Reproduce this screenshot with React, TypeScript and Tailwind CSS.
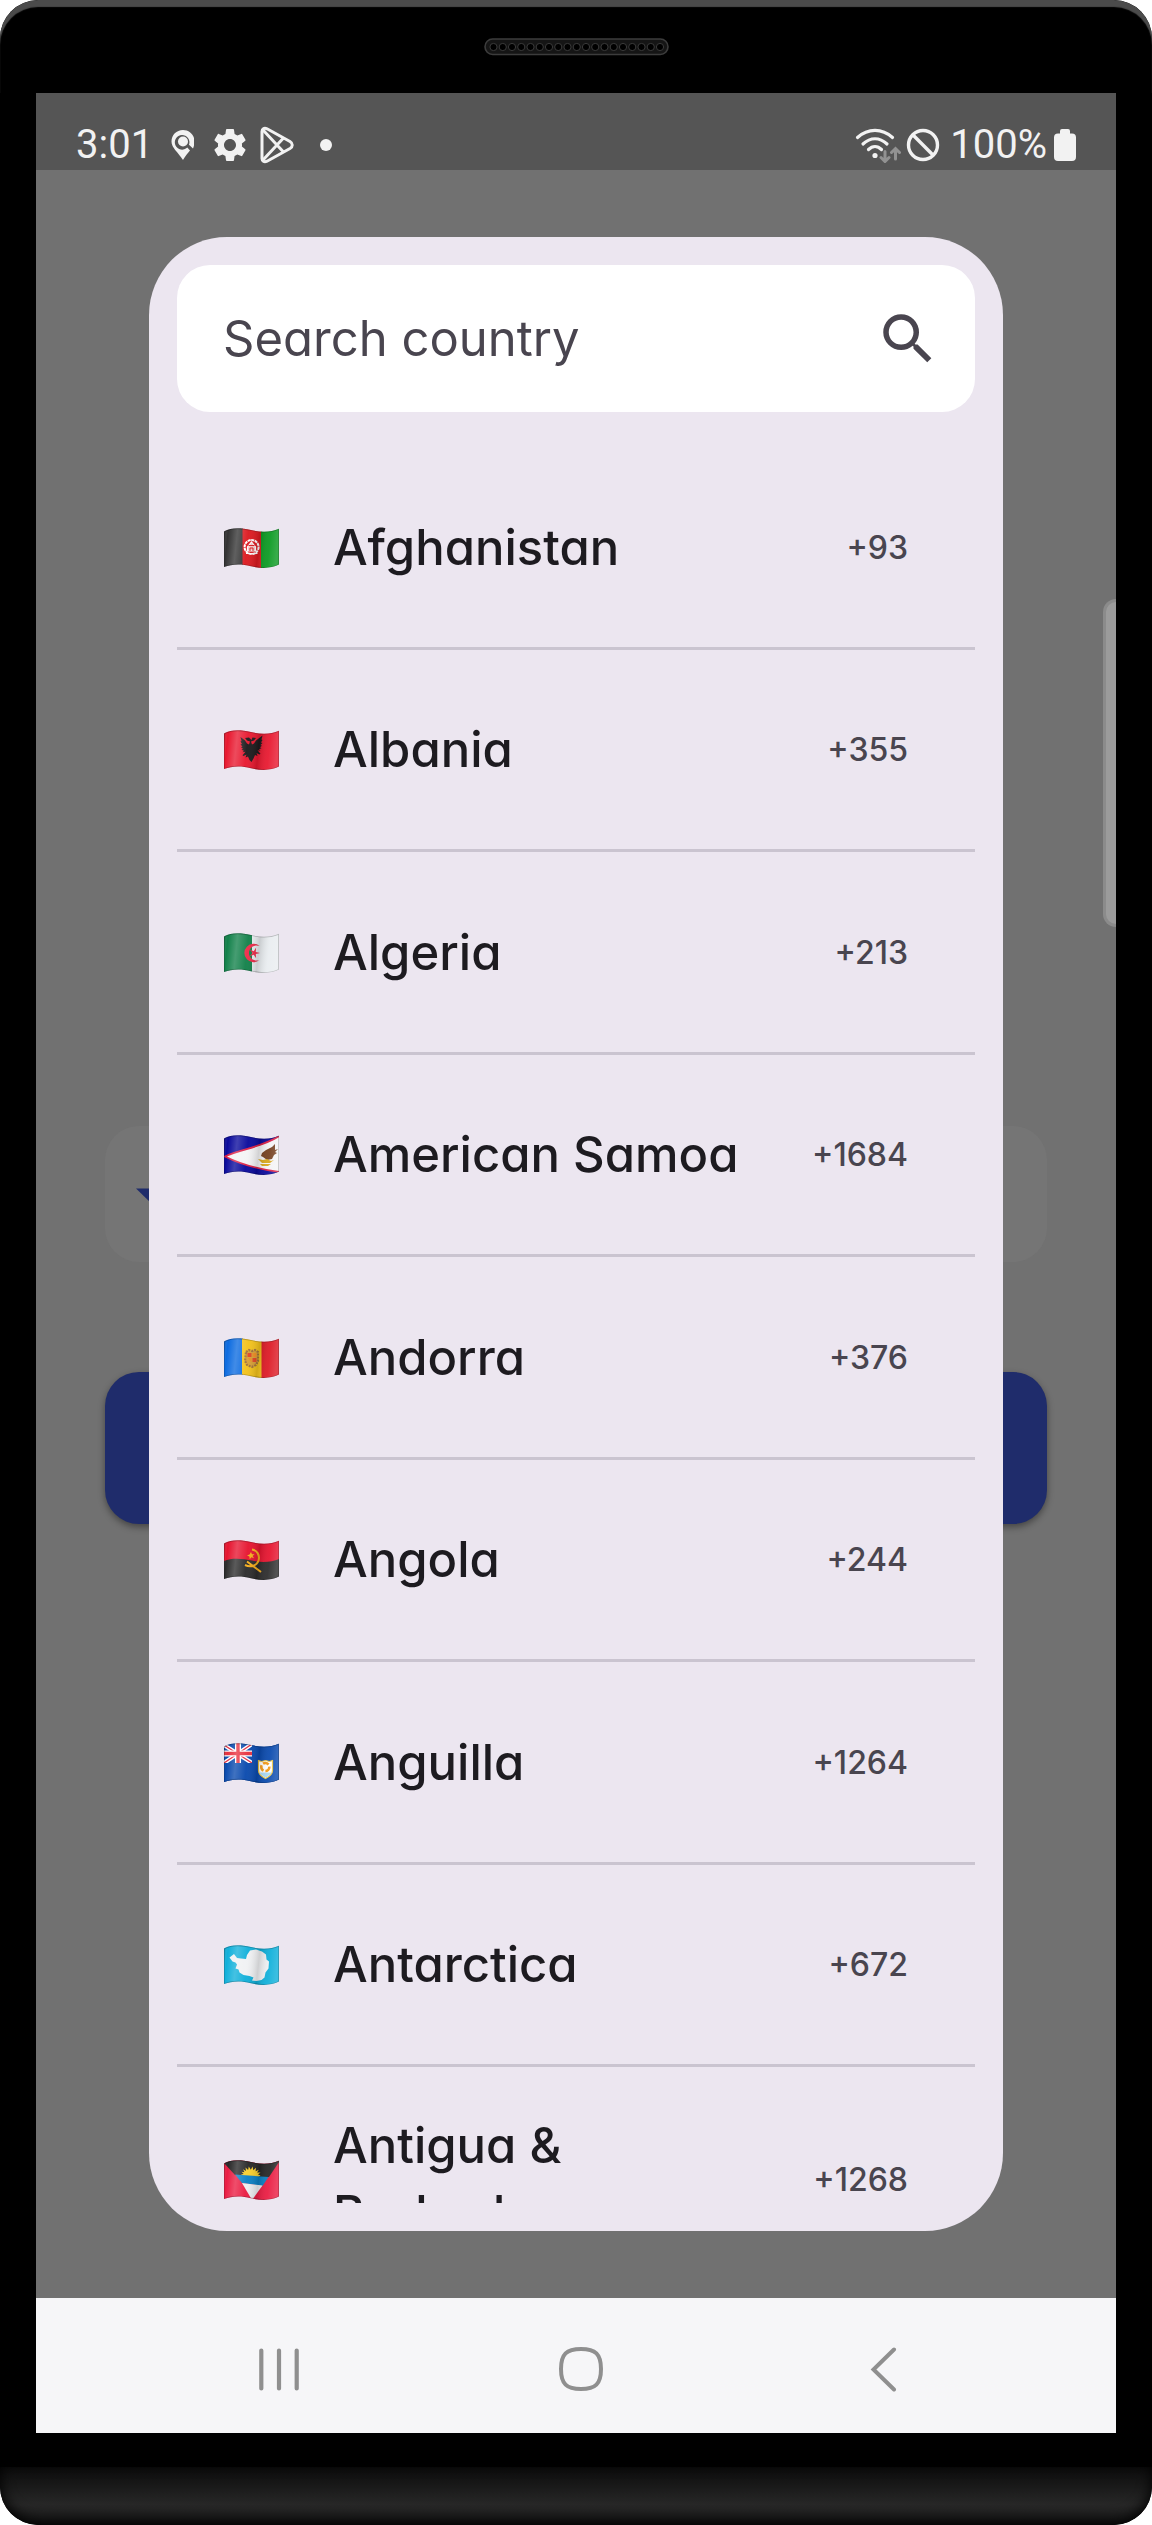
import React, { useId, useState } from "react";
import { MdSearch, MdSettings } from "react-icons/md";

const FLAG_SHAPE =
  "M0 3.5C7 -0.5 16 -0.5 27 2C38 4.8 47 4.2 55 0.8V36.6C47 40.6 37 40.8 27 38.2C17 35.6 8 36 0 39Z";

function Flag({ label, children }: { label: string; children: React.ReactNode }) {
  const id = useId();
  return (
    <svg viewBox="0 0 55 40" className="h-[40px] w-[55px] shrink-0" role="img" aria-label={`Flag of ${label}`}>
      <defs>
        <clipPath id={`${id}c`}>
          <path d={FLAG_SHAPE} />
        </clipPath>
        <linearGradient id={`${id}g`} x1="0" y1="0" x2="1" y2="0.08">
          <stop offset="0" stopColor="#000" stopOpacity="0.22" />
          <stop offset="0.08" stopColor="#fff" stopOpacity="0" />
          <stop offset="0.25" stopColor="#fff" stopOpacity="0.22" />
          <stop offset="0.45" stopColor="#fff" stopOpacity="0.04" />
          <stop offset="0.66" stopColor="#000" stopOpacity="0.14" />
          <stop offset="0.85" stopColor="#fff" stopOpacity="0.06" />
          <stop offset="1" stopColor="#fff" stopOpacity="0.18" />
        </linearGradient>
      </defs>
      <g clipPath={`url(#${id}c)`}>
        {children}
        <rect width="55" height="41" fill={`url(#${id}g)`} />
        <path d={FLAG_SHAPE} fill="none" stroke="#000" strokeOpacity="0.22" strokeWidth="1.6" />
      </g>
    </svg>
  );
}

const flags: Record<string, React.ReactNode> = {
  Afghanistan: (
    <>
      <rect width="19" height="41" fill="#333" />
      <rect x="18.5" width="19" height="41" fill="#dc1a20" />
      <rect x="37" width="18" height="41" fill="#0b9a22" />
      <circle cx="27.6" cy="19" r="7" fill="none" stroke="#fff" strokeWidth="2" strokeDasharray="3 0.6" />
      <path d="M23.5 23v-4l4-5 4 5v4zM22 25.500h11.500" fill="#f7c9c9" stroke="#fff" strokeWidth="1.2" />
      <path d="M26 23v-3h3v3M24.500 17.500h6" stroke="#dc1a20" strokeWidth="1" fill="none" />
    </>
  ),
  Albania: (
    <>
      <rect width="55" height="41" fill="#e8182f" />
      <path
        d="M27.500 10L25 7.500 21 8l2 2.500 3 1-1 3-2-1-2-3-4.500-3.500 1 4-1 .500 1.500 2.500-1.500.500 2 2-1.500.800 2 1.500-1.500 1 2.500 1-1.500 1.500 3-.500-3 3.500 1 .700 3-1.500-1 3 2.500-1 1.500 3.500L27.500 32l2-3.500 1.500-3.500 2.500 1-1-3 3 1.500 1-.700-3-3.500 3 .500-1.500-1.500 2.500-1-1.500-1 2-1.500-1.500-.800 2-2-1.500-.500 1.500-2.500-1-.500 1-4L32 10.500l-2 3-2 1-1-3 3-1 2-2.500-3.500-.500z"
        fill="#1c1a1c"
      />
    </>
  ),
  Algeria: (
    <>
      <rect width="28" height="41" fill="#12814a" />
      <rect x="28" width="27" height="41" fill="#e9edf0" />
      <path d="M35.500 13a9.200 9.200 0 1 0 0 14a7.600 7.600 0 1 1 0-14z" fill="#ee2b49" />
      <path d="M36 20l-4.200 1 .300 4.300-2.300-3.600-4 1.600 2.700-3.300-2.700-3.400 4 1.600 2.300-3.600-.300 4.300z" fill="#ee2b49" />
    </>
  ),
  "American Samoa": (
    <>
      <rect width="55" height="41" fill="#0a0a9c" />
      <path d="M1 21.500C16 14 40 12 56 .500V37C40 35 22 32 1 21.500z" fill="#f4f4f5" stroke="#dc1f45" strokeWidth="1.800" />
      <path d="M38 18l4-3 6-3 3-3v6l3-1-3 3 2 1-3 2-2 4-5 1-4-3-2-1z" fill="#74401f" />
      <path d="M34 24l5 1 4-1 4 2 3-1-4 3H38zM36 29h11l-3 2h-6z" fill="#d9a81c" />
    </>
  ),
  Andorra: (
    <>
      <rect width="19" height="41" fill="#0c6be0" />
      <rect x="18" width="20" height="41" fill="#f3c21b" />
      <rect x="37.500" width="18" height="41" fill="#dd1a25" />
      <path d="M22 14l3-2 3 1 3-1 3 2v9l-2 4-4 2-5-2-2-4z" fill="#d8a036" stroke="#a1713c" strokeWidth="2.200" strokeDasharray="2 1" />
      <path d="M23.500 15h4v4h-4zM28.500 20h4v4h-4z" fill="#e24525" />
      <path d="M28.500 15h4v4h-4zM24 20h3.500v4.500z" fill="#ef8d22" />
    </>
  ),
  Angola: (
    <>
      <rect width="55" height="22" fill="#e6142f" />
      <path d="M0 21C9 17 20 19 28 20.500C38 23 48 22 55 19V41H0z" fill="#2c2c2c" />
      <path d="M28 9.500C33 10 36 15 34.500 20.500C33 25.500 27 28 21 25M23 21.500L37 32" fill="none" stroke="#f7ae1c" strokeWidth="2" />
      <path d="M27 12l1 2.300 2.500-.300-1.800 2 1.300 2.200-2.600-.900-1.700 2-.300-2.700-2.400-1 2.500-1z" fill="#f7ae1c" />
    </>
  ),
  Anguilla: (
    <>
      <rect width="55" height="41" fill="#0a4aae" />
      <path d="M0 2L28 20M28 1L0 20" stroke="#fff" strokeWidth="4" />
      <path d="M0 2L28 20M28 1L0 20" stroke="#e22b40" strokeWidth="1.400" />
      <path d="M14 0V20M0 10.500H28" stroke="#fff" strokeWidth="6" />
      <path d="M14 0V20M0 10.500H28" stroke="#e8303f" strokeWidth="3.400" />
      <path d="M28 0V20H0V41H55V0z" fill="#0a4aae" />
      <path d="M34.500 17.500l3 1 4-1 4 1 3-1v10c0 4-4 6.500-7 8-3-1.500-7-4-7-8z" fill="#fff" stroke="#ecc440" strokeWidth="1.200" />
      <path d="M35.500 29.500h12c-1 2.500-4 4-6 5-2-1-5-2.500-6-5z" fill="#a9d8f3" />
      <circle cx="41.300" cy="24" r="4" fill="none" stroke="#f59a17" strokeWidth="2.600" strokeDasharray="6 2" />
    </>
  ),
  Antarctica: (
    <>
      <rect width="55" height="41" fill="#10b0da" />
      <path
        d="M10 9l3 4 4 .500 5 .500 1-4 3-4.500 6-1 6 2 4 3 .500 5 2.500 2-.500 7-3 4-1 5-3 2.500-5 1-4.500-.500 1.500-3-4-1.500-6-1-4-2.500-1-3-3-1 1.500-4-1.500-2-3-1-3-4z"
        fill="#f0f1f3"
      />
    </>
  ),
  "Antigua & Barbuda": (
    <>
      <rect width="55" height="41" fill="#ea1c42" />
      <path d="M0 3V0H55V2L45 17 28 17 11 15z" fill="#272727" />
      <path d="M19 16l-2-1.500 2.700-.500-2.200-2.200 3 .500-1.500-3 3 1.800-.500-3.600 2.600 2.600.700-3.600 2 3.200 1.800-3.200.700 3.700 2.700-2.500-.400 3.500 3.200-1.500-1.700 2.900 3.400-.200-2.500 2.200 2.500.900-2 1.500z" fill="#f9cf2c" />
      <path d="M11 14.500L44.500 17L38.500 26L18 23z" fill="#0a80c4" />
      <path d="M18 23L38.500 25.500L28 40z" fill="#eceef1" />
    </>
  ),
};

const countries = [
  { name: "Afghanistan", code: "+93" },
  { name: "Albania", code: "+355" },
  { name: "Algeria", code: "+213" },
  { name: "American Samoa", code: "+1684" },
  { name: "Andorra", code: "+376" },
  { name: "Angola", code: "+244" },
  { name: "Anguilla", code: "+1264" },
  { name: "Antarctica", code: "+672" },
  { name: "Antigua & Barbuda", code: "+1268" },
];

function Speaker() {
  return (
    <svg viewBox="0 0 185 18" className="h-[18px] w-[185px]" aria-hidden="true">
      <rect x="1" y="1" width="183" height="15.500" rx="7.700" fill="#151515" stroke="#3c3c3c" strokeWidth="1.600" />
      {Array.from({ length: 19 }, (_, i) => (
        <circle key={i} cx={9.5 + i * 9.25} cy="9" r="3.600" fill="#000" stroke="#3a3a3a" strokeWidth="1" />
      ))}
    </svg>
  );
}

function StatusBar() {
  return (
    <header className="flex h-[77px] items-end justify-between bg-[#555] px-[40px] pb-[4px] font-['Roboto',sans-serif] text-[40px] leading-[42px] text-[#f2f2f2]">
      <div className="flex items-center">
        <span className="w-[92px]">3:01</span>
        <svg viewBox="0 0 26 32" className="h-[32px] w-[26px]" aria-hidden="true">
          <path
            fillRule="evenodd"
            fill="currentColor"
            d="M15 1C8.500 1 3.500 6 3.500 12.500C3.500 19 10 23 15 31C17 27.500 19.500 24.500 22 21.500L19.300 18.500A7.300 7.300 0 1 1 21 15.800L25 19.500C26 17 26.500 15 26.500 12.500C26.500 6 21.500 1 15 1z"
          />
          <circle cx="15" cy="12.500" r="5" fill="currentColor" />
        </svg>
        <MdSettings className="ml-[16px] size-[40px]" />
        <svg viewBox="0 0 36 38" className="ml-[9px] h-[38px] w-[36px]" fill="none" stroke="currentColor" strokeWidth="3" strokeLinejoin="round" aria-hidden="true">
          <path d="M3 5.500C3 2.500 5.500 1.500 8 2.800L31 15.500C34 17.300 34 20.700 31 22.500L8 35.200C5.500 36.500 3 35.500 3 32.500z" />
          <path d="M4 4L24.500 26M4 34L24.500 12" />
        </svg>
        <span className="ml-[25px] size-[12px] rounded-full bg-current" />
      </div>
      <div className="flex items-center">
        <svg viewBox="0 0 46 36" className="h-[36px] w-[46px]" fill="none" stroke="currentColor" strokeWidth="3.200" strokeLinecap="round" aria-hidden="true">
          <path d="M2.500 10.500C13 1 27 1 37.500 10.500M8 17C15.500 10 24.500 10 32 17M13.500 22.500C17.500 18.500 22.500 18.500 26.500 22.500" />
          <circle cx="20" cy="28.500" r="2.600" fill="currentColor" stroke="none" />
          <g stroke="#929292" strokeWidth="3">
            <path d="M30 24.500V34M26 30.500l4 4 4-4M40.500 32V22M36.500 25.500l4-4 4 4" />
          </g>
        </svg>
        <svg viewBox="0 0 34 34" className="ml-[5px] size-[34px]" fill="none" stroke="currentColor" strokeWidth="3.400" aria-hidden="true">
          <circle cx="17" cy="17" r="14.500" />
          <path d="M6.800 6.800L27.200 27.200" />
        </svg>
        <span className="ml-[10px]">100%</span>
        <svg viewBox="0 0 22 32" className="ml-[7px] h-[32px] w-[22px]" fill="currentColor" aria-hidden="true">
          <path d="M6 4.500V2Q6 0 8 0H14Q16 0 16 2V4.500H18Q22 4.500 22 8.500V28Q22 32 18 32H4Q0 32 0 28V8.500Q0 4.500 4 4.500z" />
        </svg>
      </div>
    </header>
  );
}

function CountryDialog() {
  const [query, setQuery] = useState("");
  const shown = countries.filter((c) => c.name.toLowerCase().includes(query.trim().toLowerCase()));
  return (
    <section
      role="dialog"
      aria-label="Choose a country"
      className="absolute inset-x-[113px] inset-y-[67px] flex flex-col rounded-[78px] bg-[#ece6f0] p-[28px]"
    >
      <div className="flex h-[147px] shrink-0 items-center rounded-[33px] bg-white pr-[34px] pl-[46px] text-[#49454f]">
        <input
          id="country-search"
          type="text"
          aria-label="Search country"
          value={query}
          onChange={(e) => setQuery(e.target.value)}
          placeholder="Search country"
          className="min-w-0 flex-1 bg-transparent text-[49px] leading-[68px] outline-none placeholder:text-[#49454f] placeholder:opacity-100"
        />
        <label htmlFor="country-search" className="shrink-0">
          <MdSearch className="size-[66px]" />
        </label>
      </div>
      <div className="mt-[35px] min-h-0 flex-1 overflow-y-auto [scrollbar-width:none]">
        <ul className="grid h-[1844px] grid-rows-[repeat(8,1fr)_224px]">
          {shown.map((c) => (
            <li key={c.name} className="border-b-3 border-[#cac4d0] last:border-b-0">
              <button type="button" className="flex h-full w-full items-center pt-[2px] pr-[67px] pl-[47px] text-left">
                <Flag label={c.name}>{flags[c.name]}</Flag>
                <span className="ml-[54px] flex-1 pr-[60px] text-[49px] leading-[68px] font-medium text-[#1d1b20]">
                  {c.name}
                </span>
                <span className="text-[32px] leading-[48px] font-medium text-[#49454f]">{c.code}</span>
              </button>
            </li>
          ))}
        </ul>
      </div>
    </section>
  );
}

export default function App() {
  return (
    <div className="flex h-screen flex-col overflow-hidden rounded-[38px] bg-black font-['Inter',sans-serif] [font-feature-settings:'cv11']">
      <div className="flex h-[93px] shrink-0 items-start justify-center rounded-t-[38px] pt-[38px] shadow-[inset_0_7px_1px_#4b4b4b]">
        <Speaker />
      </div>
      <div className="mx-[36px] flex min-h-0 flex-1 flex-col">
        <StatusBar />
        <main className="relative flex min-h-0 flex-1 flex-col overflow-hidden bg-[#717171] px-[69px] pt-[956px]">
          <div className="flex h-[136px] shrink-0 items-start rounded-[34px] bg-[#757575] pt-[62px] pl-[31px]">
            <svg viewBox="0 0 36 18" className="h-[18px] w-[36px]" aria-hidden="true">
              <path d="M0 0.500H36L18 18z" fill="#1f2c6b" />
            </svg>
          </div>
          <button
            type="button"
            aria-label="Continue"
            className="mt-[110px] h-[152px] shrink-0 rounded-[34px] bg-[#1f2c6b] shadow-[0_3px_7px_rgba(0,0,0,0.4)]"
          />
          <CountryDialog />
          <div className="absolute top-[429px] right-0 h-[328px] w-[13px] rounded-l-[13px] border-3 border-r-0 border-[#8b8b8b] bg-[#9b9b9b]" />
        </main>
        <nav className="grid h-[135px] shrink-0 grid-cols-3 place-items-center bg-[#f6f6f8] pt-[8px] pr-[82px] pl-[92px] text-[#8f8f8f]">
          <button type="button" aria-label="Recent apps">
            <svg viewBox="0 0 46 46" className="size-[46px]" fill="none" stroke="currentColor" strokeWidth="4.200" strokeLinecap="round">
              <path d="M5.300 3.500V41.500M23 3.500V41.500M40.700 3.500V41.500" />
            </svg>
          </button>
          <button type="button" aria-label="Home">
            <svg viewBox="0 0 46 46" className="size-[46px]" fill="none" stroke="currentColor" strokeWidth="4">
              <path d="M23 2C37.500 2 43 7 43 22C43 37 37.500 42 23 42C8.500 42 3 37 3 22C3 7 8.500 2 23 2z" />
            </svg>
          </button>
          <button type="button" aria-label="Back">
            <svg viewBox="0 0 46 46" className="size-[46px]" fill="none" stroke="currentColor" strokeWidth="4" strokeLinecap="round">
              <path d="M34 2.500L13.500 22.500L34 42.500" />
            </svg>
          </button>
        </nav>
      </div>
      <div className="mt-[34px] h-[58px] shrink-0 rounded-b-[38px] bg-linear-to-b from-[#0c0c0c] via-[#272727] via-65% to-[#1a1a1a] shadow-[inset_0_-4px_14px_#000]" />
    </div>
  );
}
